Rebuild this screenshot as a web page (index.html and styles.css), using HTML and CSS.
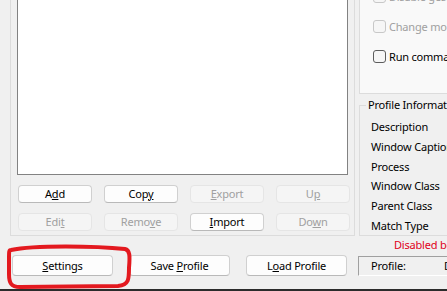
FILE: index.html
```html
<!DOCTYPE html>
<html lang="en">

<head>
    <meta charset="UTF-8">
    <meta name="viewport" content="width=device-width, initial-scale=1.0">
    <title>Profiles</title>
    <link rel="stylesheet" href="styles.css">
</head>

<body>

    <div class="window">
        <div class="main">
            <section class="group">
                <div class="listbox"></div>
                <div class="btn-grid">
                    <button class="btn">A<u>d</u>d</button>
                    <button class="btn">Cop<u>y</u></button>
                    <button class="btn" disabled><u>E</u>xport</button>
                    <button class="btn" disabled>U<u>p</u></button>
                    <button class="btn" disabled>Edi<u>t</u></button>
                    <button class="btn" disabled>Remo<u>v</u>e</button>
                    <button class="btn"><u>I</u>mport</button>
                    <button class="btn" disabled>Do<u>w</u>n</button>
                </div>
            </section>

            <div class="side">
                <div class="options">
                    <label class="check disabled"><span class="box"></span>Disable gestures</label>
                    <label class="check disabled"><span class="box"></span>Change mouse button</label>
                    <label class="check"><span class="box"></span>Run command</label>
                </div>

                <fieldset class="info">
                    <legend>Profile Information</legend>
                    <div class="info-row">Description</div>
                    <div class="info-row">Window Caption</div>
                    <div class="info-row">Process</div>
                    <div class="info-row">Window Class</div>
                    <div class="info-row">Parent Class</div>
                    <div class="info-row">Match Type</div>
                </fieldset>

                <div class="warn">Disabled because no profile is selected</div>
            </div>
        </div>

        <div class="footer">
            <button class="btn btn-big"><u>S</u>ettings</button>
            <button class="btn btn-big">Save <u>P</u>rofile</button>
            <button class="btn btn-big">L<u>o</u>ad Profile</button>
            <div class="profile-field">
                <span class="profile-label">Profile:</span>
                <span>Default</span>
            </div>
        </div>

        <!-- red marker drawn round the settings button -->
        <svg class="mark" width="447" height="291" viewBox="0 0 447 291">
            <path d="M11 250 C 34 245, 96 246, 125 249 C 130 250, 130 256, 129 268 C 129 279, 129 285, 118 286 L 20 287 C 11 287, 9 283, 9 274 L 9 257 C 9 252, 9 250, 11 250 Z"
                fill="none" stroke="#e3191f" stroke-width="4" stroke-linejoin="round" />
        </svg>
    </div>

</body>

</html>
```

FILE: styles.css
```css
* {
    box-sizing: border-box;
    margin: 0;
    padding: 0;
}

body {
    font-family: "Noto Sans", "Open Sans", sans-serif;
    font-size: 11px;
    letter-spacing: -0.2px;
    color: #000;
    background: #f0f0f0;
    overflow: hidden;
}

.window {
    position: relative;
    width: 447px;
    height: 291px;
    overflow: hidden;
    background: #f0f0f0;
    border-bottom: 2px solid #2b2b2b;
}

.main {
    display: flex;
    margin-top: -20px;
    height: 275px;
}

.group {
    flex-shrink: 0;
    margin-left: 10px;
    width: 345px;
    height: 256px;
    border: 1px solid #dcdcdc;
    padding: 7px 0 0 6px;
}

.listbox {
    width: 331px;
    height: 187px;
    background: #fff;
    border: 1px solid #828282;
}

.btn-grid {
    display: grid;
    grid-template-columns: repeat(4, 74px);
    grid-auto-rows: 18px;
    column-gap: 12px;
    row-gap: 10px;
    margin-top: 10px;
    padding-left: 1px;
}

.btn {
    font: inherit;
    letter-spacing: inherit;
    color: #000;
    background: #fdfdfd;
    border: 1px solid #d0d0d0;
    border-bottom-color: #b9b9b9;
    border-radius: 4px;
    line-height: 16px;
}

.btn:disabled {
    color: #a0a0a0;
    background: #f5f5f5;
    border-color: #e5e5e5;
}

.side {
    flex-shrink: 0;
    margin-left: 4px;
    width: 200px;
}

.options {
    height: 114px;
    border: 1px solid #dcdcdc;
    background: #f9f9f9;
    padding-left: 13px;
}

.check {
    display: flex;
    align-items: center;
    gap: 3px;
    height: 30px;
}

.check .box {
    width: 13px;
    height: 13px;
    border: 1px solid #5d5d5d;
    border-radius: 3px;
    background: #f6f6f6;
}

.check.disabled {
    color: #a0a0a0;
}

.check.disabled .box {
    border-color: #c8c8c8;
}

.info {
    margin-top: 3px;
    height: 139px;
    border: 1px solid #dcdcdc;
    padding: 4px 0 0 11px;
    min-width: 0;
}

.info legend {
    margin-left: -5px;
    padding: 0 2px;
    line-height: 16px;
    white-space: nowrap;
}

.info-row {
    line-height: 19.8px;
    white-space: nowrap;
}

.warn {
    margin-top: 1px;
    padding-left: 35px;
    line-height: 16px;
    color: #e0001b;
    white-space: nowrap;
}

.footer {
    display: grid;
    grid-template-columns: 101px 101px 101px 1fr;
    column-gap: 16px;
    padding-left: 12px;
    align-items: start;
}

.btn-big {
    height: 21px;
}

.profile-field {
    display: flex;
    margin-left: -5px;
    margin-top: 1px;
    height: 20px;
    line-height: 18px;
    padding-left: 12px;
    border-top: 1px solid #a0a0a0;
    border-left: 1px solid #a0a0a0;
    border-bottom: 1px solid #fff;
    border-right: 1px solid #fff;
    white-space: nowrap;
}

.profile-label {
    width: 73px;
}

.mark {
    position: absolute;
    left: 0;
    top: 0;
    pointer-events: none;
}
```
